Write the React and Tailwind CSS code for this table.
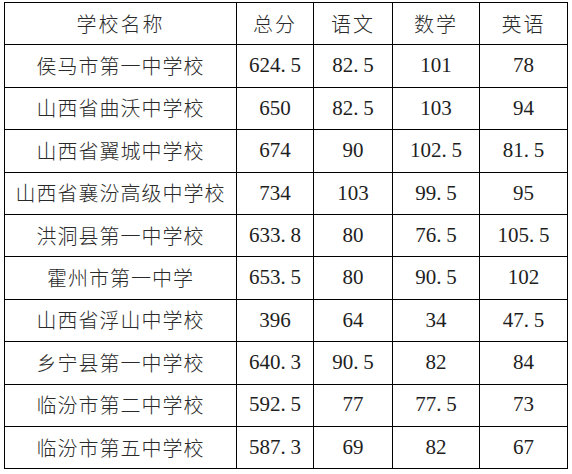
const header = ['学校名称', '总分', '语文', '数学', '英语'];

const rows = [
  ['侯马市第一中学校', '624.5', '82.5', '101', '78'],
  ['山西省曲沃中学校', '650', '82.5', '103', '94'],
  ['山西省翼城中学校', '674', '90', '102.5', '81.5'],
  ['山西省襄汾高级中学校', '734', '103', '99.5', '95'],
  ['洪洞县第一中学校', '633.8', '80', '76.5', '105.5'],
  ['霍州市第一中学', '653.5', '80', '90.5', '102'],
  ['山西省浮山中学校', '396', '64', '34', '47.5'],
  ['乡宁县第一中学校', '640.3', '90.5', '82', '84'],
  ['临汾市第二中学校', '592.5', '77', '77.5', '73'],
  ['临汾市第五中学校', '587.3', '69', '82', '67'],
];

const widths = ['w-[232px]', 'w-[77px]', 'w-[79px]', 'w-[87px]', 'w-[88px]'];

// SimSun style: the dot takes a full half-width cell
const Num = ({ value }) => {
  const [a, b] = value.split('.');
  return (
    <span>
      {a}
      {b !== undefined && (
        <>
          <span className="inline-block w-[10px] text-left">.</span>
          {b}
        </>
      )}
    </span>
  );
};

const App = () => {
  return (
    <div className="w-[572px] h-[474px] bg-white pt-[2px] pl-[4px]">
      <table className="table-fixed border-collapse text-[#1e1e1e]">
        <colgroup>
          {widths.map((w, i) => (
            <col key={i} className={w} />
          ))}
        </colgroup>
        <thead>
          <tr className="h-[42.4px]">
            {header.map((h) => (
              <th
                key={h}
                className="border border-black font-light text-center text-[20px] tracking-[2px] font-['Noto_Sans_CJK_SC',sans-serif] text-[#2a2a2a]"
              >
                {h}
              </th>
            ))}
          </tr>
        </thead>
        <tbody>
          {rows.map((r) => (
            <tr key={r[0]} className="h-[42.4px]">
              <td className="border border-black font-light text-center text-[20px] tracking-[1px] font-['Noto_Sans_CJK_SC',sans-serif] text-[#2a2a2a]">
                {r[0]}
              </td>
              {r.slice(1).map((v, i) => (
                <td
                  key={i}
                  className="border border-black text-center text-[21px] font-['Liberation_Serif',serif]"
                >
                  <Num value={v} />
                </td>
              ))}
            </tr>
          ))}
        </tbody>
      </table>
    </div>
  );
};

export default App;
